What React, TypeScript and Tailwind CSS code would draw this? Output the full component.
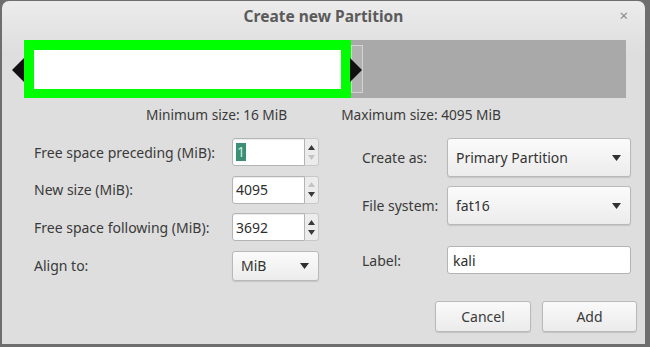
import { ReactElement } from "react";

const font = { fontFamily: '"Noto Sans", "Open Sans", sans-serif' };

const Up = ({ off }: { off?: boolean }) => (
	<svg width="7" height="5" viewBox="0 0 7 5">
		<path d="M3.5 0 L7 5 L0 5 Z" fill={off ? "#c4c4c4" : "#3a3a3a"} />
	</svg>
);

const Down = ({ off }: { off?: boolean }) => (
	<svg width="7" height="5" viewBox="0 0 7 5">
		<path d="M0 0 L7 0 L3.5 5 Z" fill={off ? "#c4c4c4" : "#3a3a3a"} />
	</svg>
);

type SpinProps = {
	value: string;
	selected?: boolean;
	upOff?: boolean;
	downOff?: boolean;
};

const Spin = ({ value, selected, upOff, downOff }: SpinProps): ReactElement => (
	<div className="flex h-[28px] w-[87px]">
		<div className="flex flex-1 items-center rounded-l-[3px] border border-[#b4b4b4] bg-white px-[3px] text-[14px] text-[#2e2e2e] shadow-[inset_0_1px_1px_rgba(0,0,0,0.08)]">
			{selected ? (
				<span className="bg-[#3a8f74] px-[1px] leading-[18px] text-[#cfe9df]">{value}</span>
			) : (
				value
			)}
		</div>
		<div className="flex w-[14px] flex-col items-center justify-center gap-[5px] rounded-r-[3px] border-y border-r border-[#c8c8c8] bg-[#ececec]">
			<Up off={upOff} />
			<Down off={downOff} />
		</div>
	</div>
);

const Combo = ({ text, w, h }: { text: string; w: string; h: string }): ReactElement => (
	<div
		className={`flex items-center justify-between rounded-[3px] border border-[#b9b9b9] bg-gradient-to-b from-[#fbfbfb] to-[#ececec] pl-[8px] pr-[9px] text-[14px] text-[#333] shadow-[0_1px_1px_rgba(0,0,0,0.12)] ${w} ${h}`}
	>
		<span>{text}</span>
		<svg width="9" height="6" viewBox="0 0 9 6">
			<path d="M0 0 L9 0 L4.5 6 Z" fill="#2f2f2f" />
		</svg>
	</div>
);

const Button = ({ text, w }: { text: string; w: string }): ReactElement => (
	<div
		className={`flex h-[31px] items-center justify-center rounded-[3px] border border-[#b9b9b9] bg-gradient-to-b from-[#fafafa] to-[#ebebeb] text-[14px] text-[#3a3a3a] shadow-[0_1px_1px_rgba(0,0,0,0.12)] ${w}`}
	>
		{text}
	</div>
);

const App = (): ReactElement => {
	return (
		<div style={font} className="h-[347px] w-[650px] bg-[#6e6e6e] pb-[3px] pl-[2px] pr-[5px] pt-[1px]">
			<div className="flex h-full flex-col rounded-t-[7px] bg-gradient-to-b from-[#ececec] to-[#dedede] to-[15%]">
				{/* title */}
				<div className="relative flex h-[32px] items-center justify-center">
					<span className="text-[15.5px] font-bold text-[#5b5b5b]">Create new Partition</span>
					<span className="absolute right-[17px] top-[7px] text-[15px] leading-none text-[#8a8a8a]">×</span>
				</div>

				{/* partition bar */}
				<div className="relative ml-[22px] mt-[7px] h-[58px] w-[602px] bg-[#a9a9a9]">
					<div className="h-full w-[327px] border-[10px] border-b-[9px] border-[#00ff00] bg-white" />
					<div className="absolute left-[327px] top-[5px] h-[48px] w-[12px] border border-[#d2d2d2] bg-[#b2b2b2]" />
					<svg className="absolute -left-[12px] top-[18px]" width="12" height="24" viewBox="0 0 12 24">
						<path d="M12 0 L0 12 L12 24 Z" fill="#111" />
					</svg>
					<svg className="absolute left-[326px] top-[18px]" width="12" height="24" viewBox="0 0 12 24">
						<path d="M0 0 L12 12 L0 24 Z" fill="#111" />
					</svg>
				</div>

				{/* sizes */}
				<div className="mt-[8px] flex h-[18px] items-center justify-center gap-[54px] text-[13.7px] text-[#3a3a3a]">
					<span>Minimum size: 16 MiB</span>
					<span>Maximum size: 4095 MiB</span>
				</div>

				{/* form */}
				<div className="mt-[14px] flex items-start">
					<div className="grid grid-cols-[198px_87px] items-center gap-y-[9.5px] pl-[32px] text-[14px] text-[#3a3a3a]">
						<span>Free space preceding (MiB):</span>
						<Spin value="1" selected downOff />
						<span>New size (MiB):</span>
						<Spin value="4095" upOff />
						<span>Free space following (MiB):</span>
						<Spin value="3692" />
						<span>Align to:</span>
						<Combo text="MiB" w="w-[87px]" h="h-[30px]" />
					</div>
					<div className="ml-[43px] grid grid-cols-[85px_184px] items-center text-[14px] text-[#3a3a3a]">
						<span>Create as:</span>
						<Combo text="Primary Partition" w="w-[184px]" h="h-[39px]" />
						<span className="mt-[9px]">File system:</span>
						<div className="mt-[9px]">
							<Combo text="fat16" w="w-[184px]" h="h-[39px]" />
						</div>
						<span className="mt-[21px]">Label:</span>
						<div className="mt-[21px] flex h-[28px] w-[184px] items-center rounded-[3px] border border-[#b4b4b4] bg-white px-[5px] text-[#2e2e2e]">
							kali
						</div>
					</div>
				</div>

				{/* buttons */}
				<div className="mt-[20px] flex justify-end gap-[11px] pr-[8px]">
					<Button text="Cancel" w="w-[96px]" />
					<Button text="Add" w="w-[95px]" />
				</div>
			</div>
		</div>
	);
};

export default App;
